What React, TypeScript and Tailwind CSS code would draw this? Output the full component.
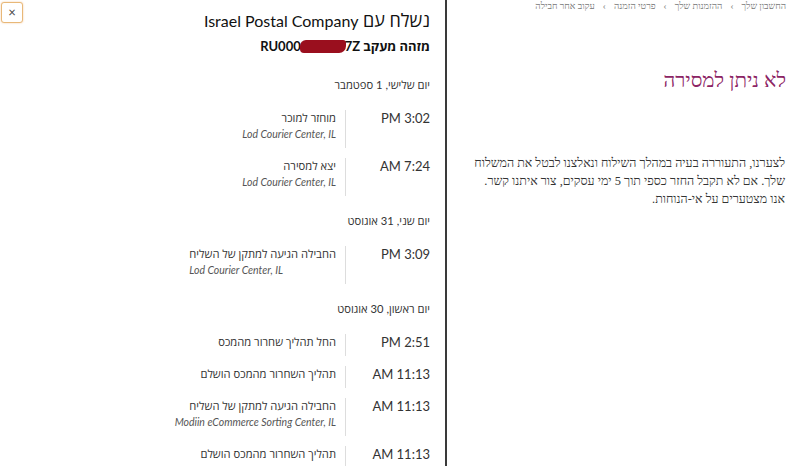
type TrackingEvent = {
  time: string;
  status: string;
  location?: string;
};

type TrackingDay = {
  date: string;
  events: TrackingEvent[];
};

const days: TrackingDay[] = [
  {
    date: "יום שלישי, 1 ספטמבר",
    events: [
      { time: "PM 3:02", status: "מוחזר למוכר", location: "Lod Courier Center, IL" },
      { time: "AM 7:24", status: "יצא למסירה", location: "Lod Courier Center, IL" },
    ],
  },
  {
    date: "יום שני, 31 אוגוסט",
    events: [
      { time: "PM 3:09", status: "החבילה הגיעה למתקן של השליח", location: "Lod Courier Center, IL" },
    ],
  },
  {
    date: "יום ראשון, 30 אוגוסט",
    events: [
      { time: "PM 2:51", status: "החל תהליך שחרור מהמכס" },
      { time: "AM 11:13", status: "תהליך השחרור מהמכס הושלם" },
      {
        time: "AM 11:13",
        status: "החבילה הגיעה למתקן של השליח",
        location: "Modiin eCommerce Sorting Center, IL",
      },
      { time: "AM 11:13", status: "תהליך השחרור מהמכס הושלם" },
    ],
  },
];

const crumbs = ["החשבון שלך", "ההזמנות שלך", "פרטי הזמנה", "עקוב אחר חבילה"];

function EventRow({ event }: { event: TrackingEvent }) {
  return (
    <div className="flex mb-[10px]">
      <div className="w-[84px] shrink-0 text-right text-[13px] leading-[16px] text-[#333]" dir="ltr">
        {event.time}
      </div>
      <div className="border-r border-[#ddd] pr-[9px] pb-[6px]">
        <div className="text-[11.2px] leading-[16px] text-[#333]">{event.status}</div>
        {event.location && (
          <div className="text-[10.5px] leading-[16px] italic text-[#555]" dir="ltr">
            {event.location}
          </div>
        )}
      </div>
    </div>
  );
}

function TrackingDrawer() {
  return (
    <div className="relative w-[445px] h-full bg-white overflow-hidden font-['Lato','Open_Sans',sans-serif]">
      <button className="absolute left-[1px] top-[2px] w-[22px] h-[21px] flex items-center justify-center rounded-[3px] border border-[#e8b878] bg-white shadow-[0_0_2px_rgba(228,121,17,0.4)] text-[#444] text-[13px] leading-none">
        ×
      </button>
      <div dir="rtl" className="pr-[15px] pt-[8px]">
        <h2 className="text-[18px] leading-[24px] text-[#111]">
          נשלח עם <span className="text-[16px]">Israel Postal Company</span>
        </h2>
        <div className="mt-[4px] text-[13px] leading-[18px] font-bold text-[#111]">
          מזהה מעקב{" "}
          <span dir="ltr" className="inline-flex items-center">
            RU000
            <span className="inline-block w-[46px] h-[13px] bg-[#9a0f1e] rounded-[6px_3px_7px_4px] -mx-[1px]" />
            7Z
          </span>
        </div>
        {days.map((day, i) => (
          <div key={day.date} className={i === 0 ? "mt-[15px] pt-[7px]" : "pt-[7px]"}>
            <div className="text-[11.2px] leading-[16px] text-[#333] mb-[17px]">
              {day.date}
            </div>
            {day.events.map((ev, j) => (
              <EventRow key={j} event={ev} />
            ))}
          </div>
        ))}
      </div>
    </div>
  );
}

function ReturnNotice() {
  return (
    <div dir="rtl" className="flex-1 h-full bg-white pr-[14px] font-['Liberation_Serif',serif]">
      <nav className="flex items-center gap-[8px] text-[9.3px] leading-[12px] text-[#777]">
        {crumbs.map((c, i) => (
          <span key={c} className="flex items-center gap-[8px]">
            {i > 0 && <span className="text-[#888]">›</span>}
            <span>{c}</span>
          </span>
        ))}
      </nav>
      <h1 className="mt-[53px] text-[20.5px] leading-[30px] text-[#8c2464]">לא ניתן למסירה</h1>
      <p className="mt-[59px] pr-[1px] text-[12.45px] leading-[18px] text-[#333]">
        לצערנו, התעוררה בעיה במהלך השילוח ונאלצנו לבטל את המשלוח
        <br />
        שלך. אם לא תקבל החזר כספי תוך 5 ימי עסקים, צור איתנו קשר.
        <br />
        אנו מצטערים על אי-הנוחות.
      </p>
    </div>
  );
}

export default function App() {
  return (
    <div className="flex w-[800px] h-[466px] overflow-hidden bg-white">
      <TrackingDrawer />
      <div className="w-[2px] h-full bg-[#3a3a3a]" />
      <ReturnNotice />
    </div>
  );
}
